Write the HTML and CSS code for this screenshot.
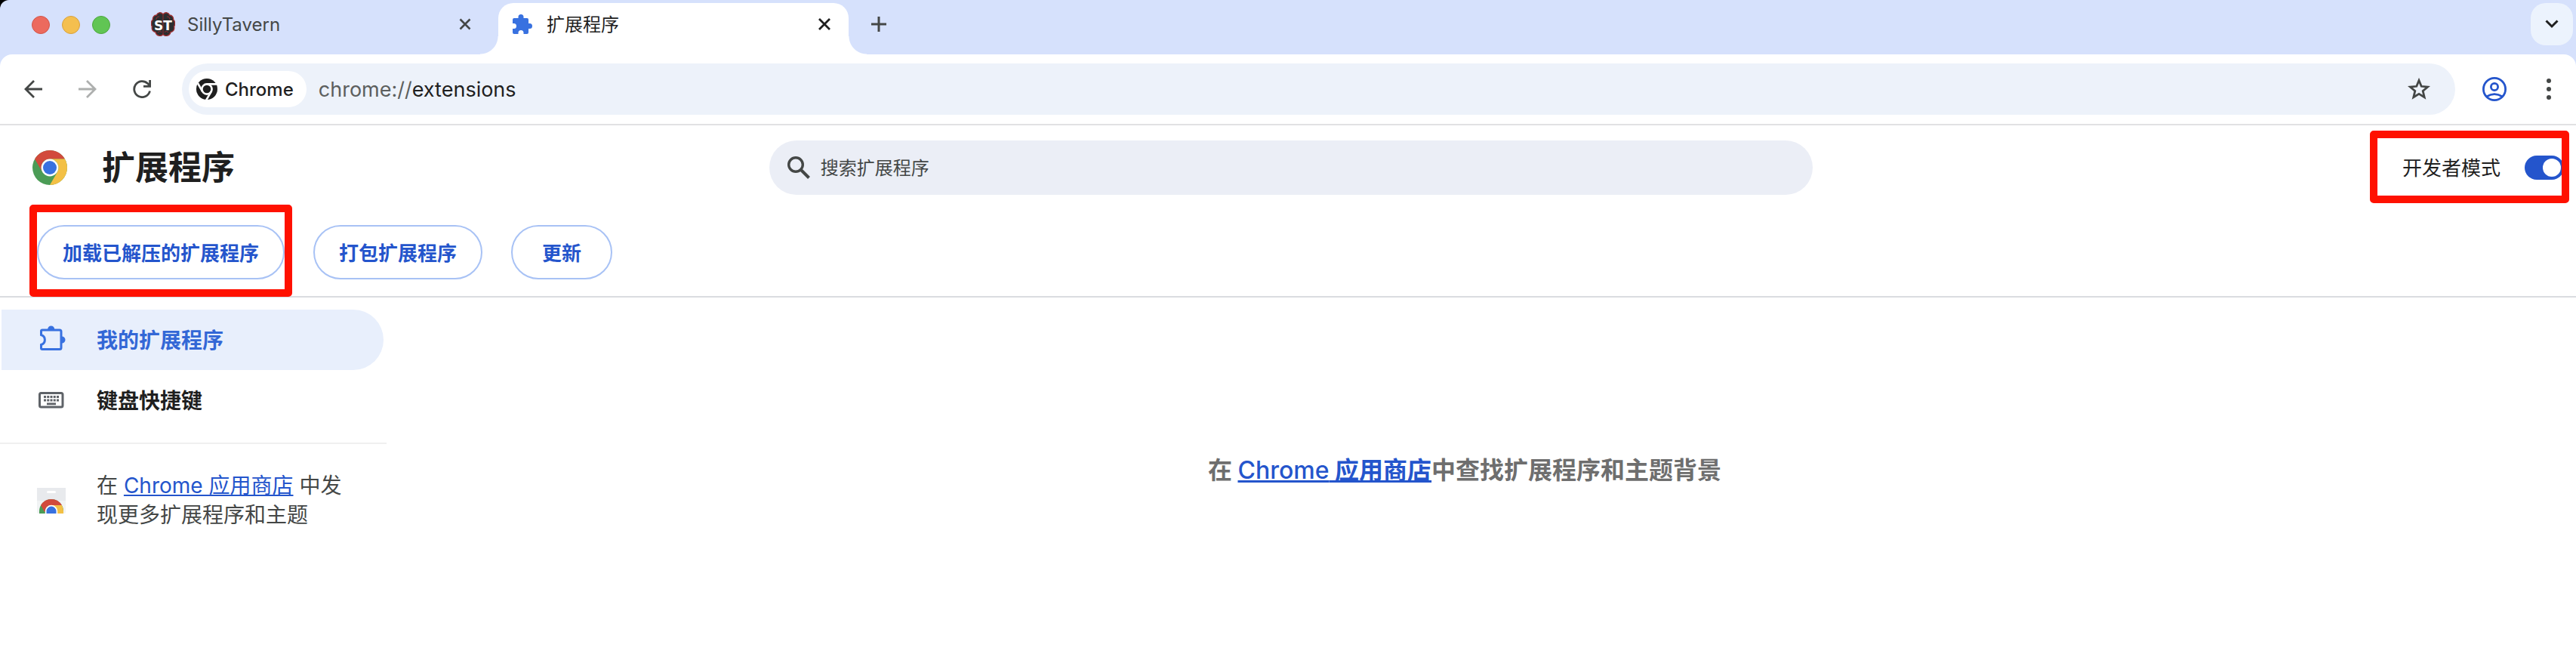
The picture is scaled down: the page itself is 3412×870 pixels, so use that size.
FILE: index.html
```html
<!DOCTYPE html>
<html lang="zh-CN">
<head>
<meta charset="utf-8">
<title>扩展程序</title>
<link rel="stylesheet" href="styles.css">
</head>
<body>
<div class="backdrop">
<div class="browser">
  <div class="tab-strip">
    <div class="window-controls">
      <button class="light light-close" aria-label="关闭窗口"></button>
      <button class="light light-min" aria-label="最小化"></button>
      <button class="light light-max" aria-label="缩放"></button>
    </div>
    <div class="tab">
      <svg class="favicon" viewBox="0 0 32 32" aria-hidden="true">
        <path d="M15.500 2.500C13-0.500 8.500.5 7.500 4 4 4 2 7 2.500 10-.5 12.500 0 17.500 1.500 19 .5 23 2.500 26 6 26.500 7 31.500 13 33 16 29.500 19 33 25 31.500 26 26.500 29.500 26 31.500 23 30.500 19 32 17.500 32.500 12.500 29.500 10 30 7 28 4 24.500 4 23.500.5 19-.5 16.500 2.500Z" fill="#2b2e30" stroke="#9c2f31" stroke-width="1.400"/>
        <path d="M16 2v28M11 6q-4 0-4 4M21 6q4 0 4 4M9 27q3-3 5 0M23 27q-3-3-5 0" fill="none" stroke="#8c2d30" stroke-width="1.100"/>
        <text class="favicon-text" x="16" y="24" text-anchor="middle">ST</text>
      </svg>
      <span class="tab-title">SillyTavern</span>
      <button class="icon-btn" aria-label="关闭标签页"><svg width="16" height="16" viewBox="0 0 16 16"><path d="M1.500 1.500l13 13M14.500 1.500l-13 13" fill="none" stroke="currentColor" stroke-width="2.600"/></svg></button>
    </div>
    <div class="tab tab-active">
      <svg class="favicon-puzzle" viewBox="0 0 26 26" aria-hidden="true"><path d="M2 5h5.500V3.500a3.500 3.500 0 0 1 7 0V5H19a2 2 0 0 1 2 2v5h1.500a3.500 3.500 0 0 1 0 7H21v5a2 2 0 0 1-2 2h-4.500v-1.500a3.500 3.500 0 0 0-7 0V26H2a2 2 0 0 1-2-2v-5h1.500a3.500 3.500 0 0 0 0-7H0V7a2 2 0 0 1 2-2Z" fill="#3871e0"/></svg>
      <span class="tab-title cjk-label">扩展程序</span>
      <button class="icon-btn" aria-label="关闭标签页"><svg width="16" height="16" viewBox="0 0 16 16"><path d="M1 1l14 14M15 1L1 15" fill="none" stroke="currentColor" stroke-width="2.800"/></svg></button>
    </div>
    <button class="icon-btn new-tab" aria-label="新建标签页"><svg width="20" height="20" viewBox="0 0 20 20"><path d="M10 0v20M0 10h20" fill="none" stroke="currentColor" stroke-width="3"/></svg></button>
    <button class="tab-search" aria-label="搜索标签页"><svg width="18" height="12" viewBox="0 0 18 12"><path d="M1.500 1.500L9 9l7.500-7.500" fill="none" stroke="currentColor" stroke-width="3"/></svg></button>
  </div>

  <div class="toolbar">
    <button class="icon-btn nav-btn" aria-label="后退"><svg width="24" height="24" viewBox="0 0 24 24"><path d="M24 12H2M13 1L2 12l11 11" fill="none" stroke="currentColor" stroke-width="2.800"/></svg></button>
    <button class="icon-btn nav-btn nav-off" aria-label="前进" disabled><svg width="24" height="24" viewBox="0 0 24 24"><path d="M0 12h22M11 1l11 11-11 11" fill="none" stroke="currentColor" stroke-width="2.800"/></svg></button>
    <button class="icon-btn nav-btn" aria-label="重新加载"><svg width="24" height="24" viewBox="0 0 24 24"><path d="M22.500 14.500A10.500 10.500 0 1 1 19.500 4.500L22 7M22.600 0v8.400H14" fill="none" stroke="currentColor" stroke-width="2.800"/></svg></button>
    <div class="omnibox">
      <button class="site-chip">
        <svg width="28" height="28" viewBox="0 0 28 28" aria-hidden="true"><circle cx="14" cy="14" r="14" fill="#1f1f1f"/><circle cx="14" cy="14" r="6.600" fill="none" stroke="#fff" stroke-width="2.600"/><path d="M14 7.400H27M8.300 17.300L1.800 6M19.700 17.300L13.200 28.500" stroke="#fff" stroke-width="2.600"/></svg>
        <span>Chrome</span>
      </button>
      <div class="url"><span class="url-scheme">chrome://</span>extensions</div>
      <button class="icon-btn bookmark" aria-label="为此标签页添加书签"><svg width="30" height="30" viewBox="0 0 30 30"><path d="M15 3.500l3.200 7.800 8.400.7-6.400 5.500 2 8.200L15 21.300l-7.200 4.400 2-8.200L3.400 12l8.400-.7Z" fill="none" stroke="currentColor" stroke-width="2.800"/></svg></button>
    </div>
    <button class="icon-btn profile" aria-label="个人资料"><svg width="32" height="32" viewBox="0 0 32 32"><g fill="none" stroke="currentColor" stroke-width="2.800"><circle cx="16" cy="16" r="14.600"/><circle cx="16" cy="13" r="4.600"/><path d="M5.500 26q10.500-6.800 21 0"/></g></svg></button>
    <button class="icon-btn menu" aria-label="更多"><svg width="8" height="28" viewBox="0 0 8 28" fill="currentColor"><circle cx="4" cy="3" r="3"/><circle cx="4" cy="14" r="3"/><circle cx="4" cy="25" r="3"/></svg></button>
  </div>
</div>
</div>

<header class="page-header">
  <div class="title-row">
    <div class="brand">
      <svg class="brand-logo" width="46" height="46" viewBox="0 0 46 46" aria-hidden="true">
        <circle cx="23" cy="23" r="23" fill="#4b9c56"/>
        <path d="M3.100 11.500A23 23 0 0 1 42.900 11.500H23a11.500 11.500 0 0 0-10 17.200Z" fill="#d24a3c"/>
        <path d="M42.900 11.500A23 23 0 0 1 23 46L33 28.700A11.500 11.500 0 0 0 23 11.500Z" fill="#f3c045"/>
        <circle cx="23" cy="23" r="11.400" fill="#fff"/><circle cx="23" cy="23" r="9" fill="#3871e0"/>
      </svg>
      <h1>扩展程序</h1>
    </div>
    <label class="search">
      <svg width="30" height="30" viewBox="0 0 30 30" aria-hidden="true"><circle cx="11" cy="11" r="9.300" fill="none" stroke="#444746" stroke-width="3.400"/><path d="M18 18l10.500 10.500" stroke="#444746" stroke-width="4"/></svg>
      <input type="search" placeholder="搜索扩展程序" aria-label="搜索扩展程序">
    </label>
    <div class="dev-mode">
      <label class="cjk-label" for="dev">开发者模式</label>
      <input class="toggle" id="dev" type="checkbox" role="switch" checked>
      <div class="mark mark-dev"></div>
    </div>
  </div>
  <div class="action-row">
    <div class="action-marked">
      <button class="pill">加载已解压的扩展程序</button>
      <div class="mark mark-load"></div>
    </div>
    <button class="pill">打包扩展程序</button>
    <button class="pill">更新</button>
  </div>
</header>

<div class="page-body">
  <aside class="sidebar">
    <nav>
      <a class="nav-item nav-current" href="#extensions">
        <svg width="38" height="36" viewBox="0 0 38 36" aria-hidden="true"><path d="M6 6H29a2 2 0 0 1 2 2V29.500a2 2 0 0 1-2 2H6a1.500 1.500 0 0 1-1.500-1.500V25.500C11 23.500 11 14.500 4.500 12.500V7.500A1.500 1.500 0 0 1 6 6Z" fill="none" stroke="#3871e0" stroke-width="3"/><path d="M13.200 5a4.500 4.500 0 0 1 9 0ZM32 14.500a4.500 4.500 0 0 1 0 9Z" fill="#3871e0"/></svg>
        <span>我的扩展程序</span>
      </a>
      <a class="nav-item" href="#shortcuts">
        <svg width="38" height="36" viewBox="0 0 38 36" aria-hidden="true"><rect x="2.500" y="9.500" width="30.500" height="18.500" rx="2" fill="none" stroke="#5f6368" stroke-width="3"/><path d="M8 14.500h20M8 19h20" stroke="#5f6368" stroke-width="3" stroke-dasharray="3 1.250"/><path d="M12 23.800h12" stroke="#5f6368" stroke-width="2.800"/></svg>
        <span>键盘快捷键</span>
      </a>
    </nav>
    <div class="store">
      <svg width="38" height="34" viewBox="0 0 38 34" aria-hidden="true">
        <path d="M0 0h38v32a2 2 0 0 1-2 2H2a2 2 0 0 1-2-2Z" fill="#f1f3f4"/><path d="M0 0h38v17H0Z" fill="#e8eaed"/><rect x="13" y="4" width="12" height="3" rx="1.500" fill="#fff"/>
        <path d="M3 34V31A16 16 0 0 1 35 31V34Z" fill="#4b9c56"/>
        <path d="M5.100 23A16 16 0 0 1 32.900 23H19a8 8 0 0 0-8 8L10 32Z" fill="#d24a3c"/>
        <path d="M32.900 23A16 16 0 0 1 35 31V34H19V23Z" fill="#f3c045"/>
        <path d="M10.800 34V31A8.200 8.200 0 0 1 27.200 31V34Z" fill="#fff"/><path d="M12.500 34V31A6.500 6.500 0 0 1 25.500 31V34Z" fill="#3871e0"/>
      </svg>
      <p>在 <a href="#store">Chrome 应用商店</a> 中发现更多扩展程序和主题</p>
    </div>
  </aside>
  <main class="empty">
    <p>在 <a href="#store"><span class="latin">Chrome</span> 应用商店</a>中查找扩展程序和主题背景</p>
  </main>
</div>
</body>
</html>
```

FILE: styles.css
```css
* { box-sizing: border-box; }

body {
  margin: 0;
  background: #fff;
  color: #1f1f1f;
  font-family: Inter, "Noto Sans CJK SC", sans-serif;
  font-size: 24px;
}

button {
  margin: 0;
  padding: 0;
  border: 0;
  background: none;
  color: inherit;
  font: inherit;
}

svg { display: block; flex: none; }

/* Chinese labels sit low on the Latin line box */
.cjk-label { padding-bottom: 3px; }

/* Tab strip */
.backdrop { background: linear-gradient(#000 50%, #fff 50%); }
.browser { border-radius: 12px 0 0 0; background: #d6e1fc; }

.tab-strip {
  display: flex;
  align-items: stretch;
  height: 72px;
  padding: 4px 4px 0 42px;
}

.window-controls {
  display: flex;
  gap: 16px;
  padding-top: 17px;
  margin-right: 54px;
}

.light { width: 24px; height: 24px; border-radius: 50%; }
.light-close { background: #ec6a5e; border: 1px solid #d25549; }
.light-min { background: #f4bf4f; border: 1px solid #d8a13d; }
.light-max { background: #61c554; border: 1px solid #4ea73f; }

.tab {
  display: flex;
  align-items: center;
  width: 460px;
  padding: 0 36px 12px 0;
  color: #444746;
}

.favicon { width: 32px; height: 32px; margin-right: 16px; }
.favicon-text { font: bold 17px "DejaVu Sans", sans-serif; fill: #fff; }
.favicon-puzzle { width: 26px; height: 26px; margin-right: 19px; }
.tab-title { flex: 1; }

.tab-active {
  position: relative;
  width: 464px;
  padding: 0 24px 12px 19px;
  border-radius: 20px 20px 0 0;
  background: #fff;
  color: #1f1f1f;
}

.tab-active::before,
.tab-active::after {
  content: "";
  position: absolute;
  bottom: 0;
  width: 24px;
  height: 24px;
}
.tab-active::before { right: 100%; background: radial-gradient(circle at 0 0, transparent 23px, #fff 24px); }
.tab-active::after { left: 100%; background: radial-gradient(circle at 100% 0, transparent 23px, #fff 24px); }

.icon-btn { display: flex; align-items: center; justify-content: center; color: #444746; }
.tab-active .icon-btn { color: #1f1f1f; }
.new-tab { width: 80px; padding-bottom: 12px; }

.tab-search {
  display: flex;
  align-items: center;
  justify-content: center;
  width: 56px;
  height: 56px;
  margin-left: auto;
  border-radius: 20px;
  background: #ecf3fd;
}

/* Toolbar */
.toolbar {
  display: flex;
  align-items: center;
  height: 94px;
  padding: 0 32px 0 8px;
  border-bottom: 2px solid #e1e1e3;
  border-radius: 16px 16px 0 0;
  background: #fff;
}

.nav-btn { width: 72px; height: 72px; }
.nav-off { color: #adafae; }

.omnibox {
  display: flex;
  flex: 1;
  align-items: center;
  height: 68px;
  margin-left: 17px;
  padding: 0 33px 0 9px;
  border-radius: 34px;
  background: #edf2fa;
}

.site-chip {
  display: flex;
  align-items: center;
  gap: 10px;
  height: 48px;
  padding: 0 17px 0 10px;
  border-radius: 24px;
  background: #fff;
  font-weight: 500;
}

.url { flex: 1; margin-left: 16px; font-size: 27px; }
.url-scheme { color: #5c5f5e; }
.profile { margin-left: 36px; color: #2455cc; }
.menu { margin-left: 52px; }

/* Page header */
.page-header { border-bottom: 2px solid #dadce0; }

.title-row {
  display: flex;
  align-items: center;
  height: 112px;
  padding: 0 16px 0 24px;
}

.brand {
  display: flex;
  flex: 1;
  align-items: center;
  gap: 46px;
}
.brand-logo { margin-left: 19px; }

h1 { margin: 0; font-size: 44px; font-weight: 700; line-height: 64px; }

.search {
  display: flex;
  align-items: center;
  width: 41%;
  max-width: 1384px;
  height: 72px;
  padding: 0 24px;
  gap: 14px;
  border-radius: 36px;
  background: #ebeef6;
}

.search input {
  flex: 1;
  min-width: 0;
  padding: 0;
  border: 0;
  outline: 0;
  background: none;
  color: #1f1f1f;
  font: inherit;
}
.search input::placeholder { color: #444746; opacity: 1; }

.dev-mode {
  position: relative;
  display: flex;
  flex: 1;
  align-items: center;
  justify-content: flex-end;
  gap: 32px;
  font-size: 26px;
}

.toggle {
  appearance: none;
  width: 52px;
  height: 32px;
  margin: 0;
  padding: 4px;
  border-radius: 16px;
  background: #2455cc;
}
.toggle::before {
  content: "";
  display: block;
  width: 24px;
  height: 24px;
  margin-left: auto;
  border-radius: 50%;
  background: #fff;
}

/* Callout frames laid over the controls */
.mark {
  position: absolute;
  border: 10px solid #ff1100;
  border-radius: 5px;
  pointer-events: none;
}
.mark-dev { top: -29px; right: -7px; width: 264px; height: 96px; }
.mark-load { top: -27px; left: -10px; right: -10px; height: 122px; }

.action-row {
  display: flex;
  gap: 38px;
  padding: 20px 49px 22px;
}
.action-marked { position: relative; }

.pill {
  height: 72px;
  min-width: 134px;
  padding: 0 32px 2px;
  border: 2px solid #a8c2f5;
  border-radius: 36px;
  color: #2455cc;
  font-size: 26px;
  font-weight: 700;
}

/* Page body */
.page-body { display: flex; }
.sidebar { width: 512px; padding-top: 16px; font-size: 28px; }

.sidebar nav {
  padding: 0 4px 16px 2px;
  border-bottom: 2px solid #f0f0f0;
}

.nav-item {
  display: flex;
  align-items: center;
  gap: 40px;
  height: 80px;
  padding: 0 0 2px 48px;
  border-radius: 0 40px 40px 0;
  color: #1f1f1f;
  font-weight: 700;
  text-decoration: none;
}
.nav-current { background: #e8effc; color: #3367d6; }

.store {
  display: flex;
  align-items: center;
  gap: 41px;
  padding: 36px 49px;
  color: #444746;
}
.store p { margin: 0; line-height: 39px; }
a { color: #2455cc; }

.empty {
  flex: 1;
  padding: 205px 44px 0 0;
  color: #6e6e6e;
  font-size: 32px;
  font-weight: 700;
  line-height: 48px;
  text-align: center;
}
.empty p { margin: 0; }
.latin { font-weight: 500; }
```
